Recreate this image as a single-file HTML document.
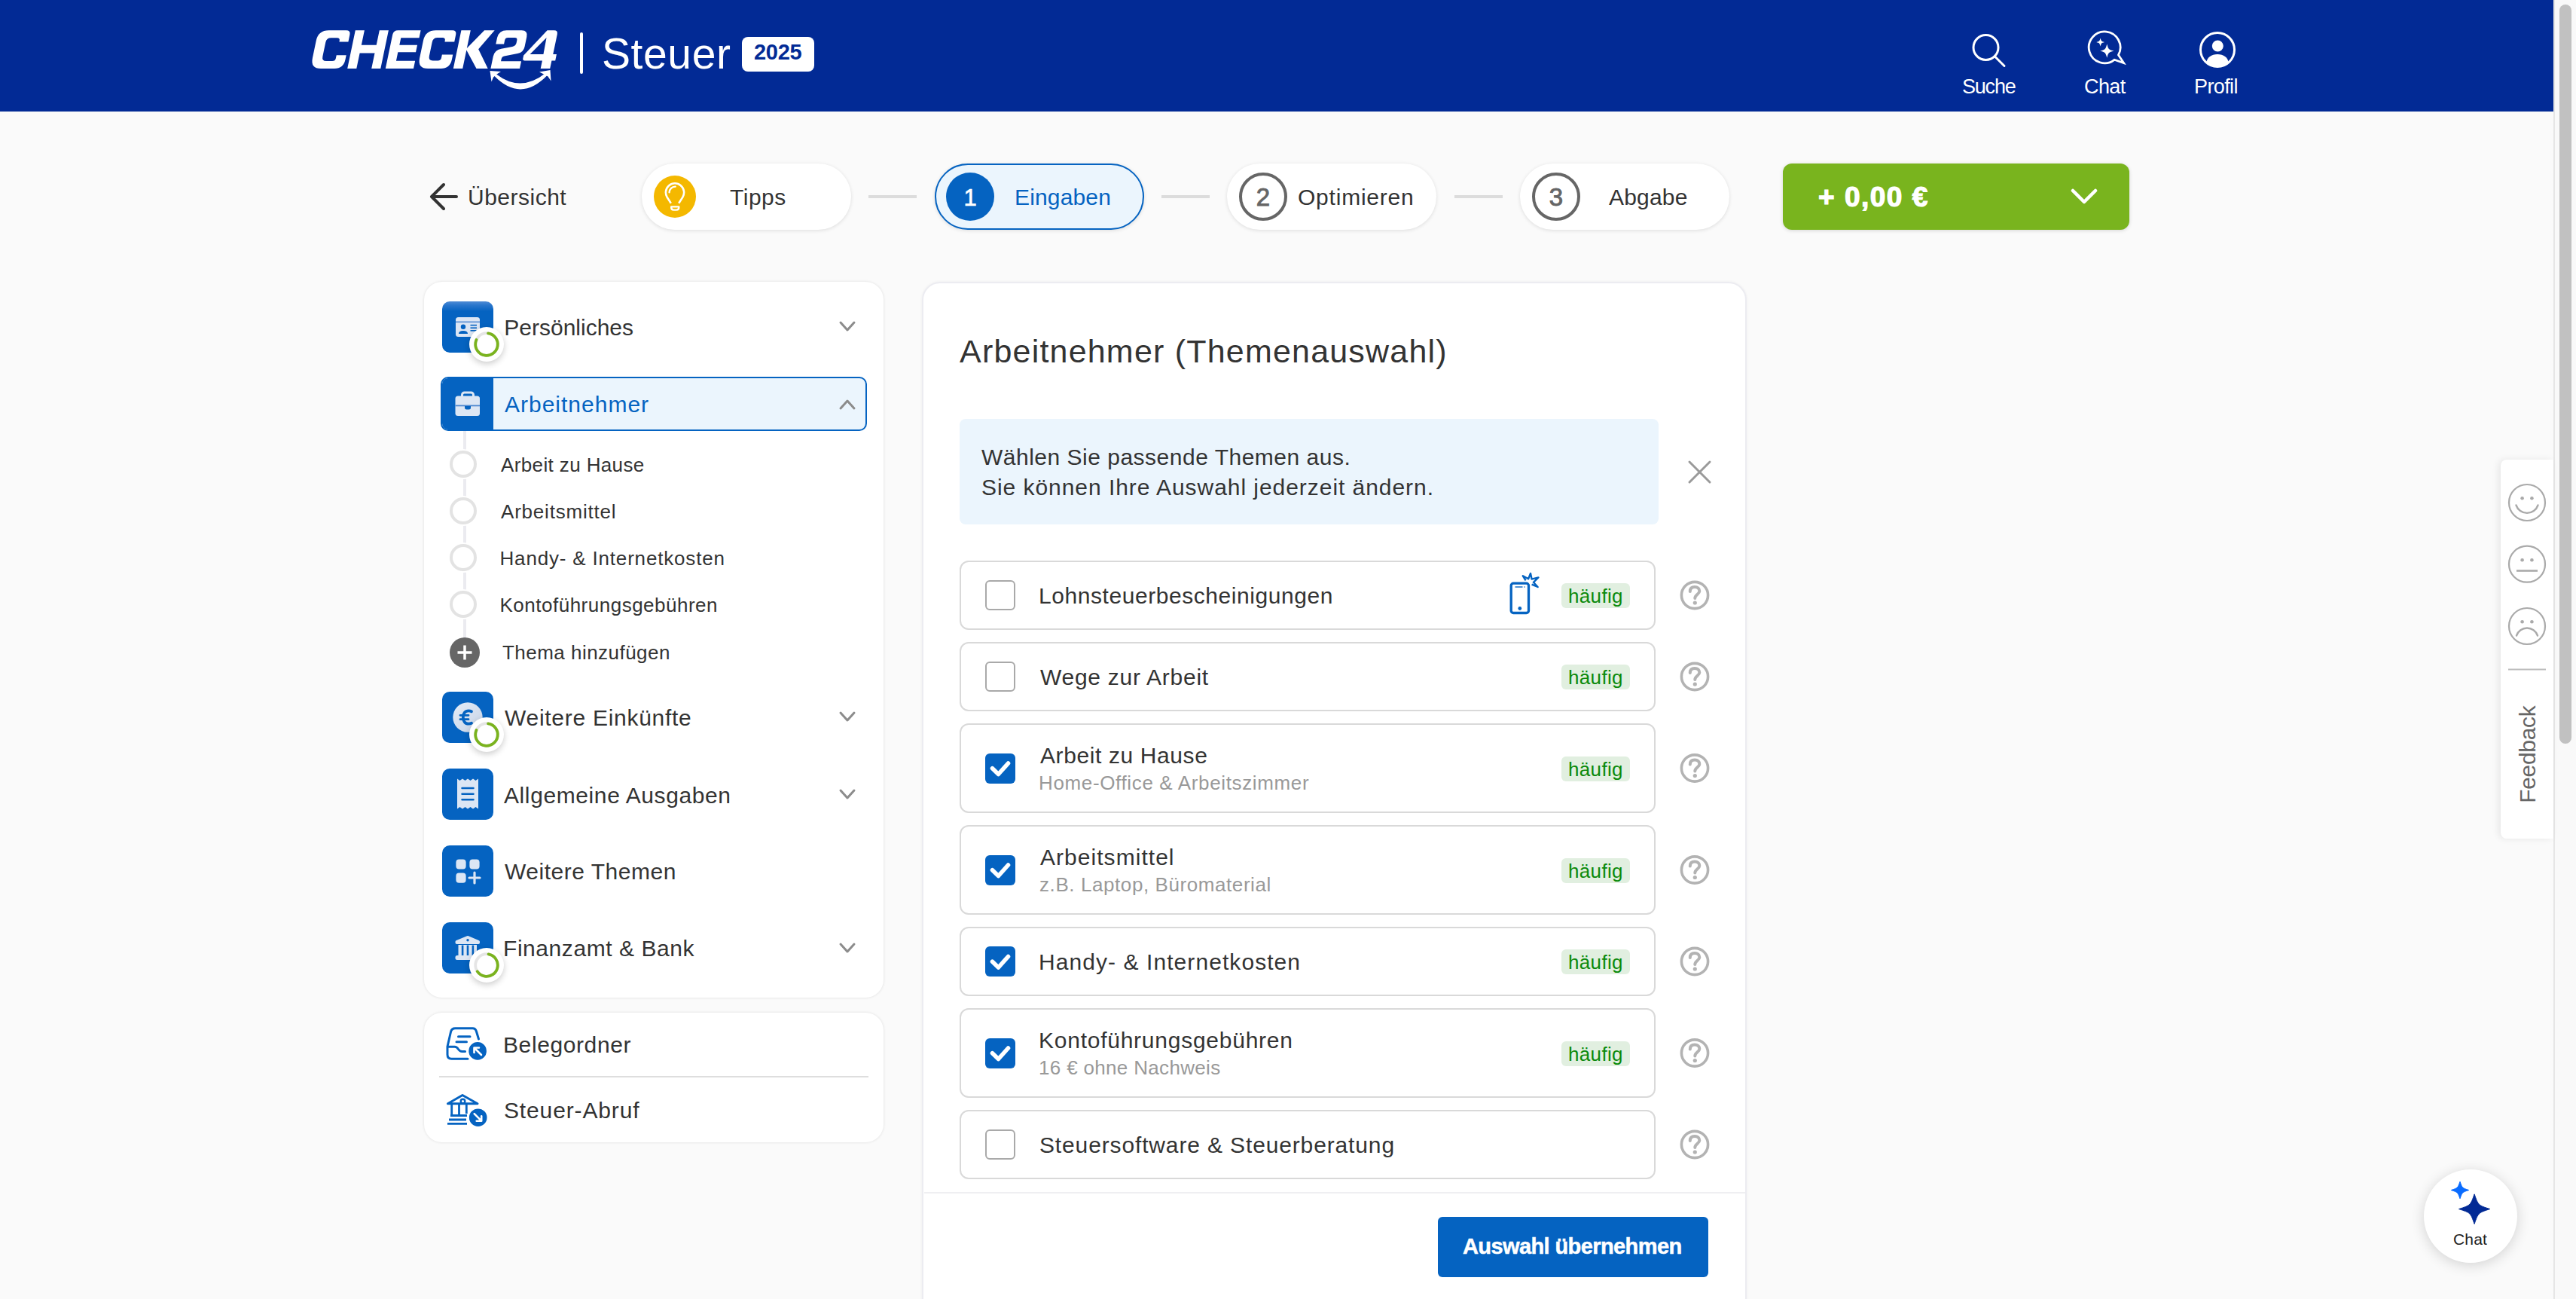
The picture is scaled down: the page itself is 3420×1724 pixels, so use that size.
<!DOCTYPE html>
<html><head><meta charset="utf-8">
<style>
*{margin:0;padding:0;box-sizing:border-box}
html,body{width:3420px;height:1724px;overflow:hidden;background:#fafafa;font-family:"Liberation Sans",sans-serif;color:#333}
.a{position:absolute}
.t{position:absolute;white-space:nowrap;line-height:1}
svg{position:absolute;overflow:visible}
#hdr{left:0;top:0;width:3390px;height:148px;background:#022a95}
#sb{left:3390px;top:0;width:30px;height:1724px;background:#f9f9f9;border-left:2px solid #e6e6e6}
#thumb{left:3398px;top:6px;width:16px;height:981px;background:#c1c1c1;border-radius:8px}
.pill{position:absolute;top:217px;width:278px;height:88px;background:#fff;border-radius:44px;box-shadow:0 1px 5px rgba(0,0,0,.12)}
.conn{position:absolute;top:259px;width:64px;height:4px;background:#dcdcdc}
.card{position:absolute;background:#fff;border-radius:24px;box-shadow:0 0 3px 1px rgba(0,0,0,.07)}
.ibox{position:absolute;left:587px;width:68px;height:68px;border-radius:10px;background:#0563c1}
.badge{position:absolute;width:46px;height:46px;border-radius:50%;background:#fff;box-shadow:0 3px 9px rgba(0,0,0,.2)}
.row{position:absolute;left:1274px;width:924px;background:#fff;border:2px solid #d9d9d9;border-radius:12px}
.cb{position:absolute;left:1308px;width:40px;height:40px;border:2px solid #a9a9a9;border-radius:6px;background:#fff}
.cbx{position:absolute;left:1308px;width:40px;height:40px;border-radius:6px;background:#0563c1}
.hf{position:absolute;left:2073px;width:91px;height:33px;background:#e1efe0;border-radius:6px}
.hft{position:absolute;left:2082px;font-size:26px;color:#0b8a0b;letter-spacing:.34px;line-height:1;white-space:nowrap}
@media (max-width:2000px){html{zoom:.5}}
</style></head><body>
<div id="hdr" class="a"></div>

<!-- HEADER -->
<svg style="left:0;top:0" width="1000" height="148">
 <g transform="translate(0,91) skewX(-11.8) translate(0,-91)" fill="#fff" fill-rule="evenodd">
  <path d="M412,54 Q412,40.3 426,40.3 L449,40.3 Q455,40.3 455,46 L455,55.5 L443,55.5 L443,54 Q443,50.2 439,50.2 L431,50.2 Q425,50.2 425,56 L425,75 Q425,81 431,81 L439,81 Q443,81 443,77.5 L443,73.2 L456,73.2 L456,79 Q456,91 444,91 L426,91 Q412,91 412,77 Z"/>
  <path d="M461.2,91 L461.2,40.3 L473.3,40.3 L473.3,59.8 L493.2,59.8 L493.2,40.3 L505.3,40.3 L505.3,91 L493.2,91 L493.2,70.4 L473.3,70.4 L473.3,91 Z"/>
  <path d="M511.8,91 L511.8,46 Q511.8,40.3 518,40.3 L548,40.3 L548,50.2 L523.8,50.2 L523.8,59.8 L547.5,59.8 L547.5,69.3 L523.8,69.3 L523.8,80.7 L549,80.7 L549,91 Z"/>
  <path d="M554.2,54 Q554.2,40.3 568,40.3 L590,40.3 Q595.8,40.3 595.8,46 L595.8,55.4 L583,55.4 L583,54 Q583,50.1 579,50.1 L572.4,50.1 Q566.4,50.1 566.4,56 L566.4,74.5 Q566.4,80.4 572.4,80.4 L579,80.4 Q583,80.4 583,77 L583,72.5 L597.4,72.5 L597.4,79 Q597.4,91 585.4,91 L568.2,91 Q554.2,91 554.2,77 Z"/>
  <path d="M601.8,91 L601.8,40.3 L614.2,40.3 L614.2,64 L632.5,40.3 L646.1,40.3 L629.8,65.3 L647.7,91 L632.5,91 L614.2,66.5 L614.2,91 Z"/>
  <path d="M651.5,58.5 L651.5,50 Q652,40.3 662,40.3 L682,40.3 Q690.5,40.3 690.5,49 L690.5,62 Q690.5,69.5 683,71 L666,74.5 Q663,75.2 663,78.5 L663,81.2 L690,81.2 L690,91 L651.4,91 L651.4,75 Q651.4,66.5 660,64.8 L674,62 Q678.5,61 678.5,57 L678.5,53.5 Q678.5,50.1 675,50.1 L666,50.1 Q662.3,50.1 662.3,53.5 L662.3,58.5 Z"/>
  <path d="M716,40.3 L725,40.3 Q730.3,40.3 730.3,45.5 L730.3,72.1 L735,72.1 L735,80.4 L730.2,80.4 L730.2,91 L717.7,91 L717.7,80.4 L694.5,80.4 Q691.5,80.4 691.5,77.5 L691.5,73.5 Z M717,50.1 L699.7,72.1 L717.5,72.1 Z"/>
 </g>
 <path d="M656,100.5 Q691.5,137 727.5,99 L725,96.5 Q691.5,123.5 659,98.5 Z" fill="#fff"/>
 <path d="M650.5,94 L665,95 L659.5,98.5 L655,102.5 L652.5,108.5 Z" fill="#fff"/>
 <path d="M730.5,93 L716,95.5 L722,98.5 L727.5,101.5 L731.5,107.5 Z" fill="#fff"/>
</svg>
<div class="a" style="left:770px;top:43px;width:4px;height:55px;background:#fff;border-radius:2px"></div>
<div class="t" style="left:799px;top:43px;font-size:57px;color:#fff;letter-spacing:.6px">Steuer</div>
<div class="a" style="left:985px;top:49px;width:96px;height:46px;background:#fff;border-radius:8px"></div>
<div class="t" style="left:1001px;top:55px;font-size:29px;font-weight:bold;color:#022a95;letter-spacing:-.3px">2025</div>
<svg style="left:0;top:0" width="3420" height="148">
 <circle cx="2636.5" cy="63" r="16.5" fill="none" stroke="#fff" stroke-width="3"/>
 <line x1="2648.5" y1="75" x2="2661" y2="87.5" stroke="#fff" stroke-width="3" stroke-linecap="round"/>
 <path d="M2819.5,83.6 L2812.5,72.9 A20.9,20.9 0 1 0 2807.1,79.3 Z" fill="none" stroke="#fff" stroke-width="2.8" stroke-linejoin="miter"/>
 <path d="M2797.30,58.40 C2799.32,65.58 2799.32,65.58 2806.50,67.60 C2799.32,69.62 2799.32,69.62 2797.30,76.80 C2795.28,69.62 2795.28,69.62 2788.10,67.60 C2795.28,65.58 2795.28,65.58 2797.30,58.40Z" fill="#fff"/>
 <path d="M2788.60,50.60 C2789.79,54.81 2789.79,54.81 2794.00,56.00 C2789.79,57.19 2789.79,57.19 2788.60,61.40 C2787.41,57.19 2787.41,57.19 2783.20,56.00 C2787.41,54.81 2787.41,54.81 2788.60,50.60Z" fill="#fff"/>
 <circle cx="2944" cy="66" r="22.5" fill="none" stroke="#fff" stroke-width="3"/>
 <circle cx="2944.3" cy="61" r="7.5" fill="#fff"/>
 <path d="M2929.5,83 C2930,76 2936,72 2944,72 C2952,72 2958,76 2958.5,83 C2955,87 2950,89 2944,89 C2938,89 2933,87 2929.5,83Z" fill="#fff"/>
</svg>
<div class="t" style="left:2605px;top:102px;font-size:27px;color:#fff;letter-spacing:-1.2px">Suche</div>
<div class="t" style="left:2767px;top:102px;font-size:27px;color:#fff;letter-spacing:-.6px">Chat</div>
<div class="t" style="left:2913px;top:102px;font-size:27px;color:#fff;letter-spacing:-.6px">Profil</div>

<!-- STEPPER -->
<svg style="left:0;top:0" width="3420" height="330">
 <path d="M606,261 L574,261 M589,245 L573,261 L589,277" fill="none" stroke="#333" stroke-width="4" stroke-linecap="round" stroke-linejoin="round"/>
</svg>
<div class="t" style="left:621px;top:247px;font-size:30px;letter-spacing:.5px">Übersicht</div>
<div class="pill" style="left:852px"></div>
<div class="a" style="left:868px;top:233px;width:56px;height:56px;border-radius:50%;background:#f4b800"></div>
<svg style="left:0;top:0" width="3420" height="330">
 <path d="M890.8,269.8 L885.6,261.6 A12.1,12.1 0 1 1 906.4,261.6 L901.2,269.8" fill="none" stroke="#fff" stroke-width="2.6" stroke-linecap="butt"/>
 <path d="M891.2,274.4 L901.3,274.4 L901.3,275.3 Q901.3,278.6 898,278.6 L894.5,278.6 Q891.2,278.6 891.2,275.3 Z" fill="none" stroke="#fff" stroke-width="2.4" stroke-linejoin="round"/>
 <path d="M888.6,255.3 A7.8,7.8 0 0 1 896.6,247.6" fill="none" stroke="#fff" stroke-width="2.4" stroke-linecap="round"/>
</svg>
<div class="t" style="left:969px;top:247px;font-size:30px;letter-spacing:.5px">Tipps</div>
<div class="conn" style="left:1153px"></div>
<div class="pill" style="left:1241px;background:#ebf5fd;border:2.5px solid #0563c1"></div>
<div class="a" style="left:1256px;top:229px;width:64px;height:64px;border-radius:50%;background:#0563c1"></div>
<div class="t" style="left:1256px;top:247px;width:64px;text-align:center;font-size:31px;color:#fff;-webkit-text-stroke:.7px #fff">1</div>
<div class="t" style="left:1347px;top:247px;font-size:30px;letter-spacing:.15px;color:#0563c1">Eingaben</div>
<div class="conn" style="left:1542px"></div>
<div class="pill" style="left:1629px"></div>
<div class="a" style="left:1645px;top:229px;width:64px;height:64px;border-radius:50%;border:4px solid #666"></div>
<div class="t" style="left:1645px;top:245px;width:64px;text-align:center;font-size:33px;color:#666;-webkit-text-stroke:.9px #666">2</div>
<div class="t" style="left:1723px;top:247px;font-size:30px;letter-spacing:.78px">Optimieren</div>
<div class="conn" style="left:1931px"></div>
<div class="pill" style="left:2018px"></div>
<div class="a" style="left:2034px;top:229px;width:64px;height:64px;border-radius:50%;border:4px solid #666"></div>
<div class="t" style="left:2034px;top:245px;width:64px;text-align:center;font-size:33px;color:#666;-webkit-text-stroke:.9px #666">3</div>
<div class="t" style="left:2136px;top:247px;font-size:30px;letter-spacing:.2px">Abgabe</div>
<div class="a" style="left:2367px;top:217px;width:460px;height:88px;border-radius:12px;background:#79b41e;box-shadow:0 1px 5px rgba(0,0,0,.15)"></div>
<div class="t" style="left:2414px;top:243px;font-size:37px;font-weight:bold;color:#fff;letter-spacing:1.5px;-webkit-text-stroke:1.2px #fff">+ 0,00 €</div>
<svg style="left:0;top:0" width="3420" height="330"><path d="M2752,253 L2767,268 L2782,253" fill="none" stroke="#fff" stroke-width="4.5" stroke-linecap="round" stroke-linejoin="round"/></svg>

<!-- SIDEBAR -->
<div class="card" style="left:563px;top:374px;width:610px;height:950px"></div>
<div class="ibox" style="top:400px;background:linear-gradient(180deg,#4f8bd5 0px,#2a76cc 5px,#0563c1 13px,#0563c1 100%)"></div>
<svg style="left:0;top:0" width="1200" height="1400">
 <rect x="605" y="421" width="32" height="26" rx="3.5" fill="#dce6f4"/>
 <rect x="605" y="426.5" width="32" height="1.6" fill="#5b8fd3"/>
 <circle cx="615" cy="433.8" r="3.2" fill="#0563c1"/>
 <path d="M609,443 Q609,439 615,439 Q621,439 621,443 Z" fill="#0563c1"/>
 <rect x="624.5" y="430.8" width="8.5" height="1.6" fill="#0563c1"/>
 <rect x="624.5" y="434.4" width="8.5" height="1.6" fill="#0563c1"/>
 <rect x="624.5" y="438" width="8.5" height="1.6" fill="#0563c1"/>
</svg>
<div class="badge" style="left:623px;top:434px"></div>
<div class="t" style="left:669.3px;top:420px;font-size:30px">Persönliches</div>

<div class="a" style="left:585px;top:500px;width:566px;height:72px;border:2.5px solid #0563c1;border-radius:10px;background:#ebf5fd;overflow:hidden"><div class="a" style="left:0;top:0;width:68px;height:72px;background:#0563c1"></div></div>
<svg style="left:0;top:0" width="1200" height="1400">
 <rect x="613.5" y="521" width="15" height="8" rx="3" fill="none" stroke="#dce6f4" stroke-width="3"/>
 <rect x="604.5" y="525.5" width="32.5" height="26.5" rx="3.5" fill="#dce6f4"/>
 <rect x="604.5" y="537.5" width="32.5" height="1.8" fill="#4d86cf"/>
 <path d="M617,539 L625,539 L625,541 Q625,543.5 622.5,543.5 L619.5,543.5 Q617,543.5 617,541 Z" fill="#0563c1"/>
</svg>
<div class="t" style="left:670px;top:522px;font-size:30px;letter-spacing:1px;color:#0563c1">Arbeitnehmer</div>
<div class="a" style="left:615px;top:572px;width:4px;height:280px;background:#ebebf0"></div>
<div class="a" style="left:597px;top:598px;width:36px;height:36px;border-radius:50%;border:4px solid #e3e3e3;background:#fff;box-shadow:0 0 0 2px #fff"></div>
<div class="a" style="left:597px;top:660px;width:36px;height:36px;border-radius:50%;border:4px solid #e3e3e3;background:#fff;box-shadow:0 0 0 2px #fff"></div>
<div class="a" style="left:597px;top:722px;width:36px;height:36px;border-radius:50%;border:4px solid #e3e3e3;background:#fff;box-shadow:0 0 0 2px #fff"></div>
<div class="a" style="left:597px;top:784px;width:36px;height:36px;border-radius:50%;border:4px solid #e3e3e3;background:#fff;box-shadow:0 0 0 2px #fff"></div>
<div class="a" style="left:597px;top:846px;width:40px;height:40px;border-radius:50%;background:#666"></div>
<svg style="left:0;top:0" width="1200" height="1400"><path d="M617,856.5 L617,875.5 M607.5,866 L626.5,866" stroke="#fff" stroke-width="3.5"/></svg>
<div class="t" style="left:665px;top:604px;font-size:26px;letter-spacing:.38px">Arbeit zu Hause</div>
<div class="t" style="left:665px;top:666px;font-size:26px;letter-spacing:.79px">Arbeitsmittel</div>
<div class="t" style="left:663.5px;top:728px;font-size:26px;letter-spacing:.82px">Handy- &amp; Internetkosten</div>
<div class="t" style="left:663.5px;top:790px;font-size:26px;letter-spacing:.5px">Kontoführungsgebühren</div>
<div class="t" style="left:667px;top:853px;font-size:26px;letter-spacing:.47px">Thema hinzufügen</div>

<div class="ibox" style="top:918px"></div>
<svg style="left:0;top:0" width="1200" height="1400">
 <defs><linearGradient id="lg" x1="0" y1="0" x2="1" y2="1"><stop offset="0" stop-color="#e4ecf7"/><stop offset="1" stop-color="#c6d3e6"/></linearGradient></defs>
 <circle cx="621" cy="952" r="19.7" fill="url(#lg)"/>
 <path d="M626,944.2 C624.5,943.5 623.3,943.3 622.2,943.3 C617.5,943.3 614.8,947 614.8,952 C614.8,957 617.5,960.7 622.2,960.7 C623.3,960.7 624.5,960.5 626,959.8" fill="none" stroke="#0563c1" stroke-width="3.8" stroke-linecap="round"/>
 <path d="M611,949.3 L622,949.3 M611,954.7 L622,954.7" stroke="#0563c1" stroke-width="2.8" stroke-linecap="round"/>
</svg>
<div class="badge" style="left:623px;top:952px"></div>
<div class="t" style="left:670px;top:938px;font-size:30px;letter-spacing:.72px">Weitere Einkünfte</div>

<div class="ibox" style="top:1020px;background:#0563c1"></div>
<svg style="left:0;top:0" width="1200" height="1400">
 <path d="M607,1033.5 L610.5,1036 L614,1033.5 L617.5,1036 L621,1033.5 L624.5,1036 L628,1033.5 L631.5,1036 L635,1033.5 L635,1073.5 L631.5,1071 L628,1073.5 L624.5,1071 L621,1073.5 L617.5,1071 L614,1073.5 L610.5,1071 L607,1073.5 Z" fill="#dce6f4"/>
 <path d="M613.5,1046 L628.5,1046 M613.5,1053.7 L628.5,1053.7 M613.5,1061.3 L628.5,1061.3" stroke="#0563c1" stroke-width="2.5" stroke-linecap="round"/>
</svg>
<div class="t" style="left:669px;top:1041px;font-size:30px;letter-spacing:.6px">Allgemeine Ausgaben</div>

<div class="ibox" style="top:1122px;background:#0563c1"></div>
<svg style="left:0;top:0" width="1200" height="1400">
 <rect x="605.4" y="1140.4" width="13.2" height="13.2" rx="4" fill="#dce6f4"/>
 <rect x="623.4" y="1140.4" width="13.2" height="13.2" rx="4" fill="#dce6f4"/>
 <rect x="605.4" y="1158.6" width="13.2" height="13.2" rx="4" fill="#dce6f4"/>
 <path d="M630,1158 L630,1172 M623,1165 L637,1165" stroke="#dce6f4" stroke-width="3.2" stroke-linecap="round"/>
</svg>
<div class="t" style="left:670px;top:1142px;font-size:30px;letter-spacing:.52px">Weitere Themen</div>

<div class="ibox" style="top:1224px"></div>
<svg style="left:0;top:0" width="1200" height="1400">
 <path d="M604.5,1250 Q604.5,1248.5 606,1248 L620,1242.2 Q621,1241.8 622,1242.2 L635.5,1248 Q637,1248.5 637,1250 L637,1251 Q637,1253 635,1253 L606.5,1253 Q604.5,1253 604.5,1251 Z" fill="#dce6f4"/>
 <circle cx="621" cy="1247.8" r="1.7" fill="#0563c1"/>
 <rect x="608.5" y="1254" width="24.5" height="14" fill="#dce6f4"/>
 <rect x="612.8" y="1254.5" width="2.6" height="13.5" fill="#0563c1"/>
 <rect x="619.7" y="1254.5" width="2.6" height="13.5" fill="#0563c1"/>
 <rect x="626.6" y="1254.5" width="2.6" height="13.5" fill="#0563c1"/>
 <rect x="604.5" y="1268" width="32.5" height="6" rx="2.5" fill="#dce6f4"/>
</svg>
<div class="badge" style="left:623px;top:1258px"></div>
<div class="t" style="left:668px;top:1244px;font-size:30px;letter-spacing:.56px">Finanzamt &amp; Bank</div>

<svg style="left:0;top:0" width="1200" height="1400" fill="none" stroke-width="3.8">
 <circle cx="646" cy="457" r="14.8" stroke="#e5e5e5"/>
 <circle cx="646" cy="457" r="14.8" stroke="#7ab31e" stroke-linecap="round" stroke-dasharray="73.5 200" transform="rotate(-82 646 457)"/>
 <circle cx="646" cy="975" r="14.8" stroke="#e5e5e5"/>
 <circle cx="646" cy="975" r="14.8" stroke="#7ab31e" stroke-linecap="round" stroke-dasharray="73.5 200" transform="rotate(-82 646 975)"/>
 <circle cx="646" cy="1281" r="14.8" stroke="#e5e5e5"/>
 <circle cx="646" cy="1281" r="14.8" stroke="#7ab31e" stroke-linecap="round" stroke-dasharray="58 200" transform="rotate(-80 646 1281)"/>
</svg>

<div class="card" style="left:563px;top:1344px;width:610px;height:172px"></div>
<svg style="left:0;top:0" width="1200" height="1600" fill="none" stroke="#0563c1" stroke-width="3" stroke-linecap="round" stroke-linejoin="round">
 <path d="M621,1405.3 L599.5,1405.3 Q594,1405.3 594,1399.5 L594,1389 L598.5,1369.5 Q599.5,1364.8 604.5,1364.8 L627.5,1364.8 Q631.3,1364.8 632.5,1369 L635.5,1379"/>
 <path d="M594.5,1389.3 L603.5,1389.3 Q606.5,1389.3 608.5,1392.5 Q610.5,1395.5 613.5,1395.5 L617.5,1395.5"/>
 <path d="M608.5,1375.8 L624,1375.8 M606,1382.7 L619.5,1382.7"/>
 <path d="M594.5,1464.8 L614,1453.5 L634,1464.8 Z" stroke-width="3"/>
 <path d="M599.7,1466 L599.7,1480 M609.5,1466 L609.5,1480 M619.3,1466 L619.3,1478" stroke-width="2.8" stroke-linecap="butt"/>
 <circle cx="614.5" cy="1461.5" r="2.8" stroke-width="2.4" fill="#fff"/>
 <path d="M598,1480.5 L620,1480.5 M596,1486 L619,1486 M594,1491.3 L620,1491.3" stroke-width="2.8" stroke-linecap="butt"/>
</svg>
<svg style="left:0;top:0" width="1200" height="1600">
 <circle cx="634.1" cy="1394.9" r="12.8" fill="#0563c1" stroke="#fff" stroke-width="2"/>
 <path d="M639,1400 L630,1391 M629.5,1397 L629.5,1390.5 L636,1390.5" fill="none" stroke="#fff" stroke-width="2.6" stroke-linecap="round" stroke-linejoin="round"/>
 <circle cx="634.7" cy="1483.2" r="12.8" fill="#0563c1" stroke="#fff" stroke-width="2"/>
 <path d="M629.7,1478.2 L638.7,1487.2 M639.2,1481.2 L639.2,1487.7 L632.7,1487.7" fill="none" stroke="#fff" stroke-width="2.6" stroke-linecap="round" stroke-linejoin="round"/>
</svg>
<div class="t" style="left:668px;top:1372px;font-size:30px;letter-spacing:.6px">Belegordner</div>
<div class="a" style="left:583px;top:1428px;width:570px;height:2px;background:#dedede"></div>
<div class="t" style="left:669px;top:1459px;font-size:30px;letter-spacing:.86px">Steuer-Abruf</div>
<svg style="left:0;top:0" width="1200" height="1400" fill="none" stroke="#8c8c8c" stroke-width="3" stroke-linecap="round" stroke-linejoin="round">
 <path d="M1116,428 L1125,438 L1134,428"/>
 <path d="M1116,542 L1125,532 L1134,542"/>
 <path d="M1116,946 L1125,956 L1134,946"/>
 <path d="M1116,1049 L1125,1059 L1134,1049"/>
 <path d="M1116,1253 L1125,1263 L1134,1253"/>
</svg>

<!-- MAIN -->
<div class="card" style="left:1224px;top:374px;width:1095px;height:1420px;border:2px solid #ececf1;box-shadow:0 0 3px 1px rgba(0,0,0,.03)"></div>
<div class="t" style="left:1274px;top:445px;font-size:43px;letter-spacing:1.2px">Arbeitnehmer (Themenauswahl)</div>
<div class="a" style="left:1274px;top:556px;width:928px;height:140px;background:#ebf5fd;border-radius:8px"></div>
<div class="t" style="left:1303px;top:592px;font-size:30px;letter-spacing:.5px">Wählen Sie passende Themen aus.</div>
<div class="t" style="left:1303px;top:632px;font-size:30px;letter-spacing:.95px">Sie können Ihre Auswahl jederzeit ändern.</div>
<svg style="left:0;top:0" width="3420" height="1724"><path d="M2243,613 L2270,640 M2270,613 L2243,640" stroke="#9a9a9a" stroke-width="3" stroke-linecap="round"/></svg>
<div class="row" style="top:744px;height:92px"></div>
<div class="cb" style="top:770.0px"></div>
<div class="t" style="left:1379px;top:775.6px;font-size:30px;letter-spacing:0.56px">Lohnsteuerbescheinigungen</div>
<div class="hf" style="top:774.0px"></div><div class="hft" style="top:778.0px">häufig</div>
<div class="row" style="top:852px;height:92px"></div>
<div class="cb" style="top:878.0px"></div>
<div class="t" style="left:1381px;top:883.6px;font-size:30px;letter-spacing:0.73px">Wege zur Arbeit</div>
<div class="hf" style="top:882.0px"></div><div class="hft" style="top:886.0px">häufig</div>
<div class="row" style="top:960px;height:119px"></div>
<div class="cbx" style="top:999.5px"></div>
<div class="t" style="left:1381px;top:988.1px;font-size:30px;letter-spacing:0.6px">Arbeit zu Hause</div>
<div class="t" style="left:1379px;top:1025.5px;font-size:26px;letter-spacing:0.64px;color:#999">Home-Office &amp; Arbeitszimmer</div>
<div class="hf" style="top:1003.5px"></div><div class="hft" style="top:1007.5px">häufig</div>
<div class="row" style="top:1095px;height:119px"></div>
<div class="cbx" style="top:1134.5px"></div>
<div class="t" style="left:1381px;top:1123.1px;font-size:30px;letter-spacing:1.04px">Arbeitsmittel</div>
<div class="t" style="left:1380px;top:1160.5px;font-size:26px;letter-spacing:0.58px;color:#999">z.B. Laptop, Büromaterial</div>
<div class="hf" style="top:1138.5px"></div><div class="hft" style="top:1142.5px">häufig</div>
<div class="row" style="top:1230px;height:92px"></div>
<div class="cbx" style="top:1256.0px"></div>
<div class="t" style="left:1379px;top:1261.6px;font-size:30px;letter-spacing:1.07px">Handy- &amp; Internetkosten</div>
<div class="hf" style="top:1260.0px"></div><div class="hft" style="top:1264.0px">häufig</div>
<div class="row" style="top:1338px;height:119px"></div>
<div class="cbx" style="top:1377.5px"></div>
<div class="t" style="left:1379px;top:1366.1px;font-size:30px;letter-spacing:0.75px">Kontoführungsgebühren</div>
<div class="t" style="left:1379px;top:1403.5px;font-size:26px;letter-spacing:0.33px;color:#999">16 € ohne Nachweis</div>
<div class="hf" style="top:1381.5px"></div><div class="hft" style="top:1385.5px">häufig</div>
<div class="row" style="top:1473px;height:92px"></div>
<div class="cb" style="top:1499.0px"></div>
<div class="t" style="left:1380px;top:1504.6px;font-size:30px;letter-spacing:0.86px">Steuersoftware &amp; Steuerberatung</div>
<svg style="left:0;top:0" width="3420" height="1724"><circle cx="2250" cy="790.0" r="17.6" fill="none" stroke="#b3b3b3" stroke-width="3.6"/><path d="M2243.8,785.0 C2243.8,780.5 2246.5,779.0 2250,779.0 C2253.8,779.0 2256.3,781.2 2256.3,784.5 C2256.3,788.5 2250.3,789.0 2250.3,794.0" fill="none" stroke="#b3b3b3" stroke-width="4" stroke-linecap="round"/><circle cx="2250.3" cy="800.0" r="2.6" fill="#b3b3b3"/><circle cx="2250" cy="898.0" r="17.6" fill="none" stroke="#b3b3b3" stroke-width="3.6"/><path d="M2243.8,893.0 C2243.8,888.5 2246.5,887.0 2250,887.0 C2253.8,887.0 2256.3,889.2 2256.3,892.5 C2256.3,896.5 2250.3,897.0 2250.3,902.0" fill="none" stroke="#b3b3b3" stroke-width="4" stroke-linecap="round"/><circle cx="2250.3" cy="908.0" r="2.6" fill="#b3b3b3"/><path d="M1317.5,1019.7 L1325.5,1027.5 L1338.5,1013.0" fill="none" stroke="#fff" stroke-width="5.6" stroke-linecap="round" stroke-linejoin="round"/><circle cx="2250" cy="1019.5" r="17.6" fill="none" stroke="#b3b3b3" stroke-width="3.6"/><path d="M2243.8,1014.5 C2243.8,1010.0 2246.5,1008.5 2250,1008.5 C2253.8,1008.5 2256.3,1010.7 2256.3,1014.0 C2256.3,1018.0 2250.3,1018.5 2250.3,1023.5" fill="none" stroke="#b3b3b3" stroke-width="4" stroke-linecap="round"/><circle cx="2250.3" cy="1029.5" r="2.6" fill="#b3b3b3"/><path d="M1317.5,1154.7 L1325.5,1162.5 L1338.5,1148.0" fill="none" stroke="#fff" stroke-width="5.6" stroke-linecap="round" stroke-linejoin="round"/><circle cx="2250" cy="1154.5" r="17.6" fill="none" stroke="#b3b3b3" stroke-width="3.6"/><path d="M2243.8,1149.5 C2243.8,1145.0 2246.5,1143.5 2250,1143.5 C2253.8,1143.5 2256.3,1145.7 2256.3,1149.0 C2256.3,1153.0 2250.3,1153.5 2250.3,1158.5" fill="none" stroke="#b3b3b3" stroke-width="4" stroke-linecap="round"/><circle cx="2250.3" cy="1164.5" r="2.6" fill="#b3b3b3"/><path d="M1317.5,1276.2 L1325.5,1284.0 L1338.5,1269.5" fill="none" stroke="#fff" stroke-width="5.6" stroke-linecap="round" stroke-linejoin="round"/><circle cx="2250" cy="1276.0" r="17.6" fill="none" stroke="#b3b3b3" stroke-width="3.6"/><path d="M2243.8,1271.0 C2243.8,1266.5 2246.5,1265.0 2250,1265.0 C2253.8,1265.0 2256.3,1267.2 2256.3,1270.5 C2256.3,1274.5 2250.3,1275.0 2250.3,1280.0" fill="none" stroke="#b3b3b3" stroke-width="4" stroke-linecap="round"/><circle cx="2250.3" cy="1286.0" r="2.6" fill="#b3b3b3"/><path d="M1317.5,1397.7 L1325.5,1405.5 L1338.5,1391.0" fill="none" stroke="#fff" stroke-width="5.6" stroke-linecap="round" stroke-linejoin="round"/><circle cx="2250" cy="1397.5" r="17.6" fill="none" stroke="#b3b3b3" stroke-width="3.6"/><path d="M2243.8,1392.5 C2243.8,1388.0 2246.5,1386.5 2250,1386.5 C2253.8,1386.5 2256.3,1388.7 2256.3,1392.0 C2256.3,1396.0 2250.3,1396.5 2250.3,1401.5" fill="none" stroke="#b3b3b3" stroke-width="4" stroke-linecap="round"/><circle cx="2250.3" cy="1407.5" r="2.6" fill="#b3b3b3"/><circle cx="2250" cy="1519.0" r="17.6" fill="none" stroke="#b3b3b3" stroke-width="3.6"/><path d="M2243.8,1514.0 C2243.8,1509.5 2246.5,1508.0 2250,1508.0 C2253.8,1508.0 2256.3,1510.2 2256.3,1513.5 C2256.3,1517.5 2250.3,1518.0 2250.3,1523.0" fill="none" stroke="#b3b3b3" stroke-width="4" stroke-linecap="round"/><circle cx="2250.3" cy="1529.0" r="2.6" fill="#b3b3b3"/>
 <rect x="2006.2" y="774.2" width="23.3" height="39.3" rx="3" fill="none" stroke="#0563c1" stroke-width="3.3"/>
 <path d="M2011.5,779 L2021.5,779" stroke="#0563c1" stroke-width="1.4"/><circle cx="2024" cy="779" r=".8" fill="#0563c1"/>
 <circle cx="2017.8" cy="807.5" r="2.4" fill="#0563c1"/>
 <path d="M2025.6,770.3 L2021.8,764.3 L2029.1,768.3 L2032,761 L2033.6,768.6 L2042.4,766.4 L2035.9,772.8 L2041.6,779 L2033.6,775.6" fill="none" stroke="#0563c1" stroke-width="2.4" stroke-linejoin="round" stroke-linecap="butt"/>
</svg>
<div class="a" style="left:1227px;top:1582px;width:1090px;height:2px;background:#efeff2"></div>
<div class="a" style="left:1909px;top:1615px;width:359px;height:80px;background:#0563c1;border-radius:6px"></div>
<div class="t" style="left:1942px;top:1640px;font-size:29px;font-weight:bold;color:#fff;letter-spacing:-.6px;-webkit-text-stroke:.5px #fff">Auswahl übernehmen</div>
<div id="sb" class="a"></div>
<div id="thumb" class="a"></div>
<!-- FEEDBACK -->
<div class="a" style="left:3320px;top:610px;width:70px;height:503px;background:#fff;border-radius:8px 0 0 8px;box-shadow:-3px 0 10px rgba(0,0,0,.08)"></div>
<svg style="left:0;top:0" width="3420" height="1724" fill="none" stroke="#aaa" stroke-width="2.2" stroke-linecap="round">
 <circle cx="3355" cy="667" r="24"/>
 <circle cx="3348.6" cy="661.3" r="2.3" fill="#aaa" stroke="none"/><circle cx="3361.4" cy="661.3" r="2.3" fill="#aaa" stroke="none"/>
 <path d="M3340.5,670.5 A15.3,15.3 0 0 0 3369.5,670.5" stroke-width="2.4"/>
 <circle cx="3355" cy="748.7" r="24"/>
 <circle cx="3348.6" cy="743.3" r="2.3" fill="#aaa" stroke="none"/><circle cx="3361.4" cy="743.3" r="2.3" fill="#aaa" stroke="none"/>
 <path d="M3341,757.5 L3369,757.5" stroke-width="2.6" stroke-linecap="butt"/>
 <circle cx="3355" cy="831" r="24"/>
 <circle cx="3348.6" cy="825.3" r="2.3" fill="#aaa" stroke="none"/><circle cx="3361.4" cy="825.3" r="2.3" fill="#aaa" stroke="none"/>
 <path d="M3341,843.5 A14.8,14.8 0 0 1 3369,843.5" stroke-width="2.4"/>
 <path d="M3330,888.5 L3380,888.5" stroke="#bdbdbd" stroke-width="2" stroke-linecap="butt"/>
</svg>
<div class="t" style="left:3291px;top:985.5px;width:130px;text-align:center;font-size:30px;color:#666;letter-spacing:-.3px;text-indent:-.3px;transform:rotate(-90deg);transform-origin:65px 15px">Feedback</div>
<!-- CHAT FAB -->
<div class="a" style="left:3218px;top:1552px;width:124px;height:124px;border-radius:50%;background:#fff;box-shadow:0 3px 18px rgba(0,0,0,.16)"></div>
<svg style="left:0;top:0" width="3420" height="1724">
 <path d="M3285.10,1584.80 C3290.25,1599.65 3290.25,1599.65 3305.70,1604.60 C3290.25,1609.55 3290.25,1609.55 3285.10,1624.40 C3279.95,1609.55 3279.95,1609.55 3264.50,1604.60 C3279.95,1599.65 3279.95,1599.65 3285.10,1584.80Z" fill="#022a95" stroke="#022a95" stroke-width="1" stroke-linejoin="round"/>
 <path d="M3266.00,1568.20 C3268.93,1576.67 3268.93,1576.67 3277.70,1579.50 C3268.93,1582.33 3268.93,1582.33 3266.00,1590.80 C3263.07,1582.33 3263.07,1582.33 3254.30,1579.50 C3263.07,1576.67 3263.07,1576.67 3266.00,1568.20Z" fill="#0a6cff" stroke="#0a6cff" stroke-width="1" stroke-linejoin="round"/>
</svg>
<div class="t" style="left:3257px;top:1634px;font-size:21px;color:#222;letter-spacing:.2px">Chat</div>

</body></html>
